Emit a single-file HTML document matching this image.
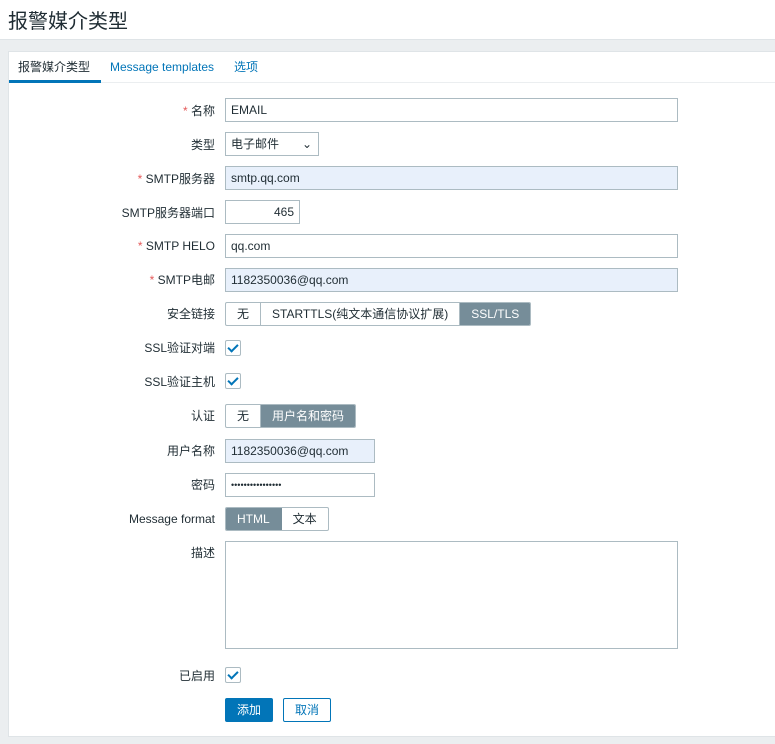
<!DOCTYPE html><html><head><meta charset="utf-8"><style>
*{box-sizing:border-box;margin:0;padding:0}
body{width:775px;height:744px;background:#ebeef0;font-family:"Liberation Sans","Noto Sans CJK SC",sans-serif;font-size:12px;color:#1f2c33;position:relative;overflow:hidden}
.hdr{position:absolute;left:0;top:0;width:775px;height:40px;background:#fff;border-bottom:1px solid #dfe4e7}
.hdr h1{position:absolute;left:8px;top:5px;font-size:20px;font-weight:normal;color:#1f2c33}
.card{position:absolute;left:8px;top:51px;width:767px;height:686px;background:#fff;border:1px solid #dfe4e7;border-right:none}
.tabs{position:absolute;left:0;top:0;width:767px;height:31px;border-bottom:1px solid #ebeef0}
.tab{position:absolute;top:0;height:28px;line-height:30px;font-size:12px;color:#0275b8;white-space:nowrap}
.act{color:#1f2c33}
.ul{position:absolute;left:0;top:28px;width:92px;height:3px;background:#0275b8}
.lbl{position:absolute;right:560px;text-align:right;white-space:nowrap;line-height:14px}
.lbl b{color:#e45959;font-weight:normal}
.in{position:absolute;left:216px;height:24px;border:1px solid #acbbc2;background:#fff;padding:0 5px;line-height:22px;white-space:nowrap}
.ro{background:#e8f0fb}
.seg{position:absolute;left:216px;height:24px;display:flex;border:1px solid #acbbc2;border-radius:2px;overflow:hidden}
.seg span{padding:0 11px;line-height:22px;border-right:1px solid #acbbc2;white-space:nowrap}
.seg span:last-child{border-right:none}
.seg .on{background:#768d99;color:#fff;border-color:#768d99}
.cb{position:absolute;left:216px;width:16px;height:16px;border:1px solid #acbbc2;border-radius:2px}
.cb:after{content:"";position:absolute;left:4px;top:1px;width:4px;height:8px;border:solid #0275b8;border-width:0 2px 2px 0;transform:rotate(45deg)}
</style></head><body>
<div class="hdr"><h1>报警媒介类型</h1></div>
<div class="card">
<div class="tabs"><span class="tab act" style="left:9px">报警媒介类型</span><span class="tab" style="left:101px">Message templates</span><span class="tab" style="left:225px">选项</span><div class="ul"></div></div>
<div class="lbl" style="top:52px"><b>*</b> 名称</div><div class="in" style="top:46px;width:453px">EMAIL</div>
<div class="lbl" style="top:86px">类型</div><div class="in" style="top:80px;width:94px">电子邮件<span style="position:absolute;right:6px;top:0">&#8964;</span></div>
<div class="lbl" style="top:120px"><b>*</b> SMTP服务器</div><div class="in ro" style="top:114px;width:453px">smtp.qq.com</div>
<div class="lbl" style="top:154px">SMTP服务器端口</div><div class="in" style="top:148px;width:75px;text-align:right">465</div>
<div class="lbl" style="top:187px"><b>*</b> SMTP HELO</div><div class="in" style="top:182px;width:453px">qq.com</div>
<div class="lbl" style="top:221px"><b>*</b> SMTP电邮</div><div class="in ro" style="top:216px;width:453px">1182350036@qq.com</div>
<div class="lbl" style="top:255px">安全链接</div><div class="seg" style="top:250px"><span>无</span><span>STARTTLS(纯文本通信协议扩展)</span><span class="on">SSL/TLS</span></div>
<div class="lbl" style="top:289px">SSL验证对端</div><div class="cb" style="top:288px"></div>
<div class="lbl" style="top:323px">SSL验证主机</div><div class="cb" style="top:321px"></div>
<div class="lbl" style="top:357px">认证</div><div class="seg" style="top:352px"><span>无</span><span class="on">用户名和密码</span></div>
<div class="lbl" style="top:392px">用户名称</div><div class="in ro" style="top:387px;width:150px">1182350036@qq.com</div>
<div class="lbl" style="top:426px">密码</div><div class="in" style="top:421px;width:150px;font-size:9px">••••••••••••••••</div>
<div class="lbl" style="top:460px">Message format</div><div class="seg" style="top:455px"><span class="on">HTML</span><span>文本</span></div>
<div class="lbl" style="top:494px">描述</div><div class="in" style="top:489px;width:453px;height:108px"></div>
<div class="lbl" style="top:617px">已启用</div><div class="cb" style="top:615px"></div>
<div style="position:absolute;left:216px;top:646px;width:48px;height:24px;background:#0275b8;color:#fff;border-radius:2px;text-align:center;line-height:24px">添加</div>
<div style="position:absolute;left:274px;top:646px;width:48px;height:24px;border:1px solid #0275b8;color:#0275b8;border-radius:2px;text-align:center;line-height:22px">取消</div>
</div>
</body></html>
